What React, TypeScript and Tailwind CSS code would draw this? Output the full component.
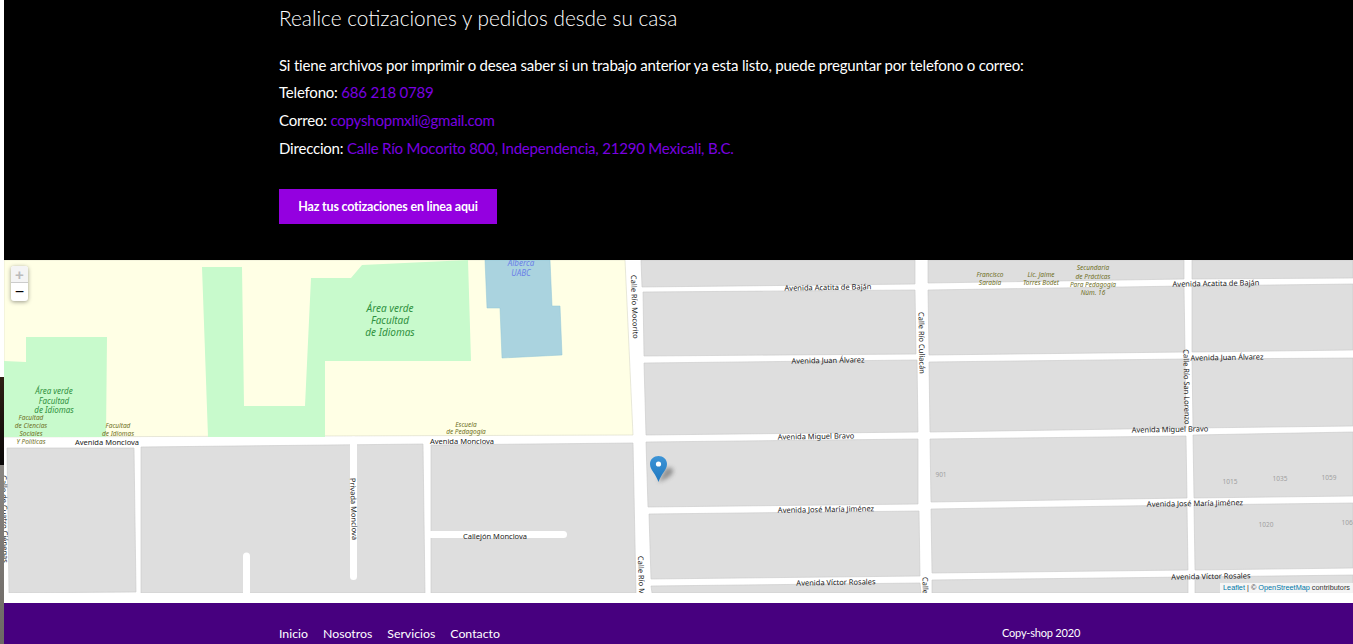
const LATO = "font-['Lato','Liberation_Sans',sans-serif]";

type Label = { x: number; y: number; t: string; r?: number };

// blocks of the map, in page coordinates minus the map origin (4, 260)
const blocks = [
  "637,0 911,0 911,24 638,27",
  "639,32 911,30 912,94 640,96",
  "640,103 913,100 914,172 642,175",
  "642,182 914,179 914,244 644,247",
  "645,254 915,251 916,316 647,319",
  "647,326 916,323 917,333 648,333",
  "924,0 1180,0 1180,19 924,23",
  "924,30 1180,26 1181,92 925,95",
  "925,102 1181,99 1182,168 926,172",
  "926,179 1182,176 1183,238 927,242",
  "927,249 1183,245 1184,310 928,313",
  "928,320 1184,317 1184,333 928,333",
  "1188,0 1349,0 1349,18 1188,19",
  "1188,26 1349,24 1349,90 1188,92",
  "1188,99 1349,98 1349,166 1189,168",
  "1189,175 1349,172 1349,236 1190,238",
  "1190,245 1349,243 1349,308 1191,310",
  "1191,317 1349,315 1349,333 1191,333",
  "3,188 130,188 132,332 5,333",
  "137,187 419,184 421,333 137,333",
  "427,185 629,183 632,333 427,333",
];

const streets: Label[] = [
  { x: 824, y: 30, t: "Avenida Acatita de Baján", r: -1 },
  { x: 1212, y: 26, t: "Avenida Acatita de Baján", r: -1 },
  { x: 824, y: 103, t: "Avenida Juan Álvarez", r: -1 },
  { x: 1223, y: 100, t: "Avenida Juan Álvarez", r: -1 },
  { x: 812, y: 179, t: "Avenida Miguel Bravo", r: -1 },
  { x: 1166, y: 172, t: "Avenida Miguel Bravo", r: -1 },
  { x: 822, y: 252, t: "Avenida José María Jiménez", r: -1 },
  { x: 1191, y: 246, t: "Avenida José María Jiménez", r: -1 },
  { x: 832, y: 325, t: "Avenida Víctor Rosales", r: -1 },
  { x: 1207, y: 319, t: "Avenida Víctor Rosales", r: -1 },
  { x: 103, y: 185, t: "Avenida Monclova" },
  { x: 458, y: 184, t: "Avenida Monclova" },
  { x: 491, y: 279, t: "Callejón Monclova" },
];

const vertical: Label[] = [
  { x: 628, y: 47, t: "Calle Río Mocorito", r: 88 },
  { x: 915, y: 83, t: "Calle Río Culiacán", r: 89 },
  { x: 1180, y: 127, t: "Calle Río San Lorenzo", r: 89 },
  { x: 347, y: 249, t: "Privada Monclova", r: 88 },
  { x: 635, y: 328, t: "Calle Río Mocorito", r: 88 },
  { x: 919, y: 348, t: "Calle Río Culiacán", r: 89 },
  { x: -2, y: 259, t: "Calle de Cuatro Ciénegas", r: 89 },
];

const olive: Label[] = [
  { x: 986, y: 17, t: "Francisco" },
  { x: 986, y: 25, t: "Sarabia" },
  { x: 1037, y: 17, t: "Lic. Jaime" },
  { x: 1037, y: 25, t: "Torres Bodet" },
  { x: 1089, y: 10, t: "Secundaria" },
  { x: 1089, y: 19, t: "de Prácticas" },
  { x: 1089, y: 27, t: "Para Pedagogía" },
  { x: 1089, y: 35, t: "Núm. 16" },
  { x: 27, y: 160, t: "Facultad" },
  { x: 27, y: 168, t: "de Ciencias" },
  { x: 27, y: 176, t: "Sociales" },
  { x: 27, y: 184, t: "Y Políticas" },
  { x: 114, y: 168, t: "Facultad" },
  { x: 114, y: 176, t: "de Idiomas" },
  { x: 462, y: 167, t: "Escuela" },
  { x: 462, y: 174, t: "de Pedagogía" },
];

const greens: Label[] = [
  { x: 386, y: 52, t: "Área verde" },
  { x: 386, y: 64, t: "Facultad" },
  { x: 386, y: 76, t: "de Idiomas" },
  { x: 50, y: 134, t: "Área verde" },
  { x: 50, y: 144, t: "Facultad" },
  { x: 50, y: 153, t: "de Idiomas" },
];

const numbers: Label[] = [
  { x: 937, y: 217, t: "901" },
  { x: 1226, y: 224, t: "1015" },
  { x: 1276, y: 221, t: "1035" },
  { x: 1325, y: 220, t: "1059" },
  { x: 1262, y: 267, t: "1020" },
  { x: 1345, y: 265, t: "1064" },
];

function MapDrawing() {
  return (
    <svg width="1349" height="333" viewBox="0 0 1349 333" className="block" style={{ fontFamily: "'Noto Sans', 'Open Sans', sans-serif" }}>
      <rect width="1349" height="333" fill="#ffffff" />
      {/* campus */}
      <polygon points="0,0 621,0 629,175 0,177" fill="#ffffe5" stroke="#d9d9c8" strokeWidth="0.6" />
      {/* green areas */}
      <polygon points="198,7 238,7 240,146 301,146 307,18 347,18 358,5 464,0 467,101 321,101 321,177 204,177" fill="#c8facc" />
      <polygon points="0,101 22,102 22,77 103,77 102,177 0,177" fill="#c8facc" />
      {/* pool */}
      <polygon points="481,0 546,0 548,46 556,46 558,95 498,98 496,48 483,48" fill="#aad3df" stroke="#8fc4d6" strokeWidth="0.5" />
      <text x="517" y="6" textAnchor="middle" fontSize="8" fontStyle="italic" fill="#6a7fe8">Alberca</text>
      <text x="517" y="16" textAnchor="middle" fontSize="8" fontStyle="italic" fill="#6a7fe8">UABC</text>
      {/* city blocks */}
      {blocks.map((p) => (
        <polygon key={p} points={p} fill="#dedede" stroke="#c8c8c8" strokeWidth="0.6" />
      ))}
      {/* dead-end lanes */}
      <path d="M242.5 296 V333" stroke="#fff" strokeWidth="7" strokeLinecap="round" />
      <path d="M349.5 180 V316.5" stroke="#fff" strokeWidth="7" strokeLinecap="round" />
      <path d="M427 274.5 H559.5" stroke="#fff" strokeWidth="7" strokeLinecap="round" />
      {greens.map((l) => (
        <text key={l.t + l.y} x={l.x} y={l.y} textAnchor="middle" fontSize={l.y < 100 ? 10 : 8} fontStyle="italic" fill="#2f9140">{l.t}</text>
      ))}
      {olive.map((l) => (
        <text key={l.t + l.x} x={l.x} y={l.y} textAnchor="middle" fontSize="6.5" fontStyle="italic" fill="#6f6f1e">{l.t}</text>
      ))}
      {streets.map((l) => (
        <text key={l.t + l.x} x={l.x} y={l.y} textAnchor="middle" fontSize="7.5" fill="#222" transform={l.r ? `rotate(${l.r} ${l.x} ${l.y})` : undefined}>{l.t}</text>
      ))}
      {vertical.map((l) => (
        <text key={l.t + l.y} x={l.x} y={l.y} textAnchor="middle" fontSize="7.5" fill="#222" transform={`rotate(${l.r} ${l.x} ${l.y})`}>{l.t}</text>
      ))}
      {numbers.map((l) => (
        <text key={l.t} x={l.x} y={l.y} textAnchor="middle" fontSize="6.5" fill="#a0a0a0">{l.t}</text>
      ))}
      {/* marker */}
      <defs>
        <linearGradient id="pin" x1="0" y1="0" x2="0" y2="1">
          <stop offset="0" stopColor="#3d94d6" />
          <stop offset="1" stopColor="#1f78c0" />
        </linearGradient>
        <filter id="blur" x="-50%" y="-50%" width="200%" height="200%"><feGaussianBlur stdDeviation="2.2" /></filter>
      </defs>
      <path d="M654 222 L662 208 C668 206 671 210 668 214 C665 218 660 220 654 222 Z" fill="#444" opacity="0.5" filter="url(#blur)" />
      <path d="M654.5 222 C652 214 646 210 646 204 C646 199 650 196 654.5 196 C659 196 663 199 663 204 C663 210 657 214 654.5 222 Z" fill="url(#pin)" />
      <circle cx="654.5" cy="204" r="2.6" fill="#fff" />
    </svg>
  );
}

function MapPanel() {
  return (
    <div className="relative h-[333px] overflow-hidden bg-white">
      <MapDrawing />
      {/* zoom control */}
      <div className="absolute left-[7px] top-[6px] w-[17px] rounded-[3px] bg-white shadow-[0_1px_4px_rgba(0,0,0,0.4)] font-['Liberation_Sans',sans-serif]">
        <div className="flex h-[17px] items-center justify-center rounded-t-[3px] border-b border-[#ccc] bg-[#f4f4f4] text-[15px] font-bold leading-none text-[#bbb]">+</div>
        <div className="flex h-[18px] items-center justify-center text-[16px] leading-none text-black">−</div>
      </div>
      {/* attribution */}
      <div className="absolute bottom-0 right-0 bg-white/70 px-[3px] font-['Liberation_Sans',sans-serif] text-[7.3px] leading-[10px] text-[#333]">
        <span className="text-[#0078a8]">Leaflet</span> | © <span className="text-[#0078a8]">OpenStreetMap</span> contributors
      </div>
    </div>
  );
}

function ContactBlock() {
  const rows = [
    { label: "Telefono:", value: "686 218 0789" },
    { label: "Correo:", value: "copyshopmxli@gmail.com" },
    { label: "Direccion:", value: "Calle Río Mocorito 800, Independencia, 21290 Mexicali, B.C." },
  ];

  return (
    <section className="h-[260px] bg-black pl-[275px] pt-[3px] text-white">
      <h2 className="text-[20.8px] font-light leading-[29px]">Realice cotizaciones y pedidos desde su casa</h2>
      <p className="mt-[20px] text-[15px] leading-[26px] tracking-[-0.2px]">
        Si tiene archivos por imprimir o desea saber si un trabajo anterior ya esta listo, puede preguntar por telefono o correo:
      </p>
      {rows.map((r) => (
        <p key={r.label} className="text-[15px] leading-[28px] tracking-[-0.2px]">
          {r.label} <a className="text-[#7a00e0]">{r.value}</a>
        </p>
      ))}
      <a className="mt-[27px] flex h-[35px] w-[218px] items-center justify-center bg-[#9400e0] pt-[2px] text-[12.5px] font-bold tracking-[-0.2px] text-white">
        Haz tus cotizaciones en linea aqui
      </a>
    </section>
  );
}

function Footer() {
  return (
    <footer className="flex h-[41px] items-start bg-[#47007f] pl-[275px] pt-[22px] text-[12.3px] leading-[18px] text-white">
      <nav className="flex w-[723px] gap-[15px]">
        <a>Inicio</a>
        <a>Nosotros</a>
        <a>Servicios</a>
        <a>Contacto</a>
      </nav>
      <span className="-mt-px text-[11px] tracking-[-0.2px]">Copy-shop 2020</span>
    </footer>
  );
}

export default function App() {
  return (
    <div className={`${LATO} flex h-[644px] w-full overflow-hidden bg-white`}>
      {/* sliver of the page background behind the content */}
      <div className="flex w-[4px] shrink-0 flex-col">
        <div className="h-[377px] bg-white" />
        <div className="h-[88px] bg-linear-to-b from-[#2f1e14] to-[#0a0808]" />
        <div className="flex-1 bg-linear-to-b from-[#8a8682] to-[#6c6864]" />
      </div>
      <main className="min-w-0 flex-1">
        <ContactBlock />
        <MapPanel />
        <div className="h-[10px] bg-white" />
        <Footer />
      </main>
    </div>
  );
}
